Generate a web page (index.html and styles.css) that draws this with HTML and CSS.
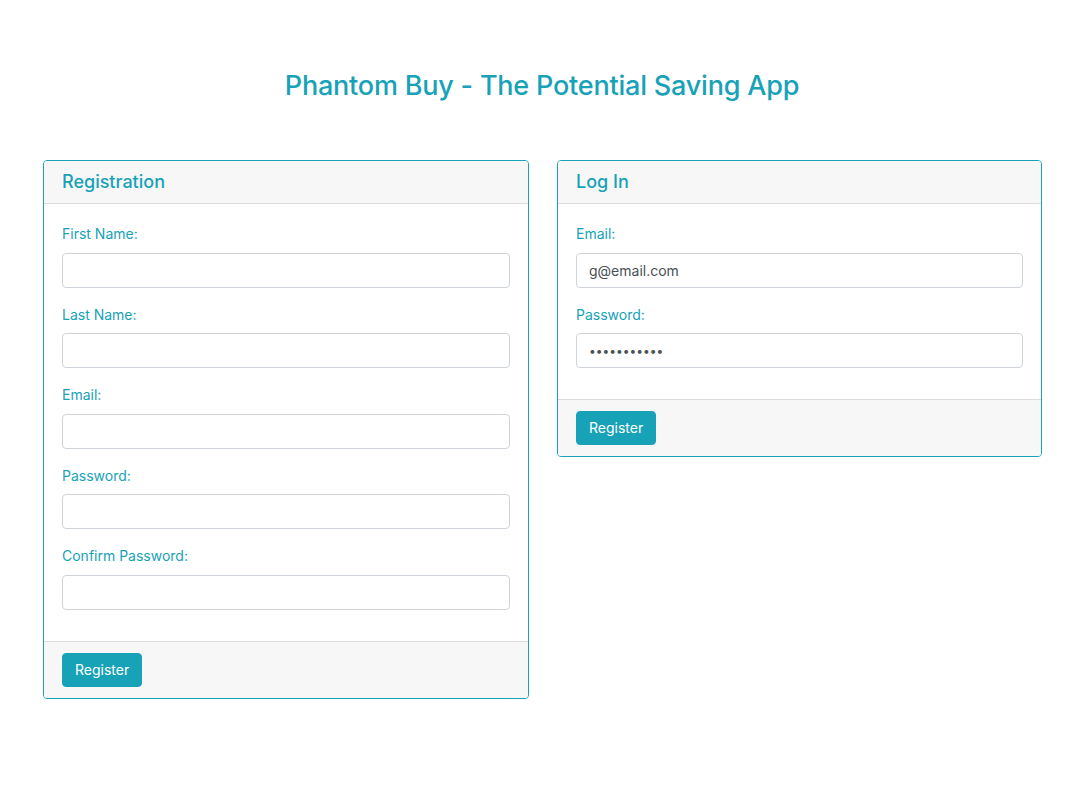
FILE: index.html
```html
<!DOCTYPE html>
<html lang="en">
<head>
<meta charset="utf-8">
<title>Phantom Buy</title>
<link rel="stylesheet" href="styles.css">
</head>
<body>
<div class="page">
  <h3 class="title">Phantom Buy - The Potential Saving App</h3>
  <div class="cards">
    <div class="card">
      <div class="card-header">Registration</div>
      <div class="card-body">
        <div class="form-group">
          <label>First Name:</label>
          <input class="form-control" type="text">
        </div>
        <div class="form-group">
          <label>Last Name:</label>
          <input class="form-control" type="text">
        </div>
        <div class="form-group">
          <label>Email:</label>
          <input class="form-control" type="text">
        </div>
        <div class="form-group">
          <label>Password:</label>
          <input class="form-control" type="password">
        </div>
        <div class="form-group">
          <label>Confirm Password:</label>
          <input class="form-control" type="password">
        </div>
      </div>
      <div class="card-footer"><button class="btn">Register</button></div>
    </div>
    <div class="card">
      <div class="card-header">Log In</div>
      <div class="card-body">
        <div class="form-group">
          <label>Email:</label>
          <input class="form-control" type="text" value="g@email.com">
        </div>
        <div class="form-group">
          <label>Password:</label>
          <input class="form-control" type="password" value="12345678901">
        </div>
      </div>
      <div class="card-footer"><button class="btn">Register</button></div>
    </div>
  </div>
</div>
</body>
</html>
```

FILE: styles.css
```css
* { box-sizing: border-box; }
html, body { margin: 0; padding: 0; background: #fff; }
body {
  font-family: Inter, "Noto Sans", "Liberation Sans", sans-serif;
  font-size: 14px;
  line-height: 1.5;
  color: #212529;
}
.page {
  width: 998px;
  margin-left: 43px;
  padding-top: 69px;
}
.title {
  margin: 0;
  text-align: center;
  font-size: 27px;
  font-weight: 500;
  line-height: 34px;
  color: #17a2b8;
  letter-spacing: -0.2px;
}
.cards {
  margin-top: 57px;
  display: grid;
  grid-template-columns: 486px 485px;
  column-gap: 28px;
  align-items: start;
}
.card {
  border: 1px solid #17a2b8;
  border-radius: 4px;
  overflow: hidden;
  background: #fff;
}
.card-header {
  background: #f7f7f7;
  border-bottom: 1px solid #dcdcdc;
  padding: 10px 18px;
  font-size: 18px;
  font-weight: 500;
  line-height: 22px;
  color: #17a2b8;
}
.card-body {
  padding: 19px 18px 15px;
}
.form-group { margin-bottom: 16px; }
label {
  display: block;
  margin-bottom: 8px;
  line-height: 21.5px;
  color: #17a2b8;
}
.form-control {
  display: block;
  width: 100%;
  height: 35px;
  padding: 6px 12px;
  font-family: inherit;
  font-size: 14px;
  color: #495057;
  background: #fff;
  border: 1px solid #ced4da;
  border-radius: 4px;
  outline: none;
}
input[type=password].form-control { font-size: 12px; letter-spacing: 0; }
.card-footer {
  background: #f7f7f7;
  border-top: 1px solid #dcdcdc;
  padding: 11px 18px 11px;
}
.btn {
  display: inline-block;
  font-family: inherit;
  font-size: 14px;
  font-weight: 400;
  line-height: 20px;
  padding: 6px 12px;
  color: #fff;
  background: #17a2b8;
  border: 1px solid #17a2b8;
  border-radius: 4px;
}
```
